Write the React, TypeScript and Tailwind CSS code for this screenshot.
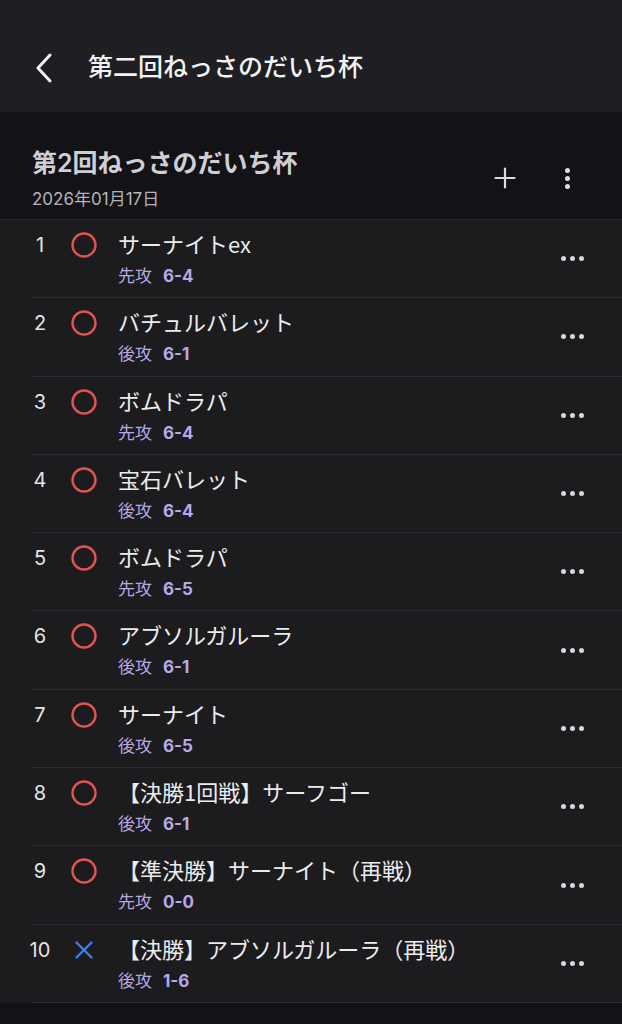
type Match = {
  no: number;
  win: boolean;
  name: string;
  order: string;
  score: string;
};

const matches: Match[] = [
  { no: 1, win: true, name: "サーナイトex", order: "先攻", score: "6-4" },
  { no: 2, win: true, name: "バチュルバレット", order: "後攻", score: "6-1" },
  { no: 3, win: true, name: "ボムドラパ", order: "先攻", score: "6-4" },
  { no: 4, win: true, name: "宝石バレット", order: "後攻", score: "6-4" },
  { no: 5, win: true, name: "ボムドラパ", order: "先攻", score: "6-5" },
  { no: 6, win: true, name: "アブソルガルーラ", order: "後攻", score: "6-1" },
  { no: 7, win: true, name: "サーナイト", order: "後攻", score: "6-5" },
  { no: 8, win: true, name: "【決勝1回戦】サーフゴー", order: "後攻", score: "6-1" },
  { no: 9, win: true, name: "【準決勝】サーナイト（再戦）", order: "先攻", score: "0-0" },
  { no: 10, win: false, name: "【決勝】アブソルガルーラ（再戦）", order: "後攻", score: "1-6" },
];

const font = "font-['Inter','Noto_Sans_CJK_JP',sans-serif]";

function ResultMark({ win }: { win: boolean }) {
  if (win) {
    return (
      <svg width="26" height="26" viewBox="0 0 26 26">
        <circle cx="13" cy="13" r="11.5" fill="none" stroke="#e0544f" strokeWidth="2.4" />
      </svg>
    );
  }
  return (
    <svg width="26" height="26" viewBox="0 0 26 26">
      <path d="M5.5 5.5 L20.5 20.5 M20.5 5.5 L5.5 20.5" stroke="#3b80e6" strokeWidth="2.4" strokeLinecap="round" />
    </svg>
  );
}

function MatchRow({ m }: { m: Match }) {
  return (
    <div className="flex h-[77.3px] bg-[#1c1c1f]">
      <div className="w-[56px] pl-[24px] pt-[12px] text-center text-[20px] leading-[26px] text-[#e4e4e6]">
        {m.no}
      </div>
      <div className="ml-[15px] mt-[12px] flex h-[26px] w-[26px] items-center justify-center">
        <ResultMark win={m.win} />
      </div>
      <div className="ml-[21px] flex-1 pt-[10px]">
        <div className="whitespace-nowrap font-['Noto_Sans_CJK_JP',sans-serif] text-[22px] leading-[26px] text-[#ececee]">
          {m.name}
        </div>
        <div className="mt-[9px] flex items-center gap-[11px] text-[17px] leading-[22px] text-[#b9a8e6]">
          <span>{m.order}</span>
          <span className="font-bold">{m.score}</span>
        </div>
      </div>
      <div className="flex w-[78px] items-center justify-center pr-[22px]">
        <div className="flex gap-[4px]">
          <span className="h-[5px] w-[5px] rounded-full bg-[#d8d8dc]" />
          <span className="h-[5px] w-[5px] rounded-full bg-[#d8d8dc]" />
          <span className="h-[5px] w-[5px] rounded-full bg-[#d8d8dc]" />
        </div>
      </div>
    </div>
  );
}

export default function App() {
  return (
    <div className={`min-h-[1024px] w-full bg-[#131217] ${font}`}>
      {/* top bar */}
      <header className="flex h-[112px] items-center bg-[#1f1f23] pt-[24px]">
        <svg className="ml-[34px]" width="20" height="30" viewBox="0 0 20 30">
          <path d="M16 2 L4 15 L16 28" fill="none" stroke="#f2f2f4" strokeWidth="3" strokeLinecap="round" strokeLinejoin="round" />
        </svg>
        <h1 className="ml-[34px] text-[25px] font-medium text-[#f2f2f4]">第二回ねっさのだいち杯</h1>
      </header>

      {/* tournament heading */}
      <section className="flex h-[108px] items-start border-b border-[#2a2a2e]">
        <div className="flex-1 pl-[32px] pt-[35px]">
          <div className="text-[25px] font-semibold leading-[32px] text-[#cfcfd3]">第2回ねっさのだいち杯</div>
          <div className="mt-[9px] text-[17px] leading-[22px] text-[#b4b4b8]">2026年01月17日</div>
        </div>
        <div className="flex items-center pr-[52px] pt-[55px]">
          <svg width="22" height="22" viewBox="0 0 22 22">
            <path d="M11 1.5 V20.5 M1.5 11 H20.5" stroke="#dcdce0" strokeWidth="2.2" strokeLinecap="round" />
          </svg>
          <div className="ml-[49px] flex flex-col gap-[3px]">
            <span className="h-[5px] w-[5px] rounded-full bg-[#dcdce0]" />
            <span className="h-[5px] w-[5px] rounded-full bg-[#dcdce0]" />
            <span className="h-[5px] w-[5px] rounded-full bg-[#dcdce0]" />
          </div>
        </div>
      </section>

      {/* match list */}
      <div className="bg-[#1c1c1f]">
        {matches.map((m) => (
          <div key={m.no}>
            <MatchRow m={m} />
            <div className="ml-[32px] h-px bg-[#2c2c30]" />
          </div>
        ))}
      </div>
    </div>
  );
}
